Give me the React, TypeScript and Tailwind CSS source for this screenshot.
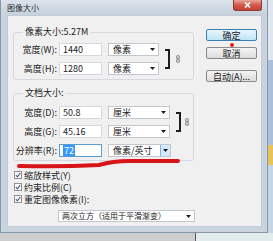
import React from 'react';

const Arrow = () => (
  <svg width="5" height="3" viewBox="0 0 5 3">
    <path d="M0 0h5L2.5 3z" fill="#1e1e1e" />
  </svg>
);

// small gray link glyph next to the bracket
const Chain = () => (
  <svg width="4" height="8" viewBox="0 0 4 8">
    <rect x="0.5" y="0.5" width="3" height="3.4" rx="1.2" fill="#c8c8c8" stroke="#858585" strokeWidth="0.9" />
    <rect x="0.5" y="4.1" width="3" height="3.4" rx="1.2" fill="#c8c8c8" stroke="#858585" strokeWidth="0.9" />
  </svg>
);

const Select = ({ value, width, hot }: { value: string; width: string; hot?: boolean }) => (
  <div className={`flex h-[13px] items-center justify-between border border-[#c3c7cd] bg-white pl-[4px] ${width}`}>
    <span>{value}</span>
    {hot ? (
      <span className="flex h-full w-[10px] items-center justify-center border-l border-[#7eb4ea] bg-[#d6e9fb]">
        <Arrow />
      </span>
    ) : (
      <span className="mr-[3px] flex">
        <Arrow />
      </span>
    )}
  </div>
);

const Row = ({
  label,
  value,
  unit,
  selWidth,
  focus,
}: {
  label: string;
  value: string;
  unit: string;
  selWidth: string;
  focus?: boolean;
}) => (
  <div className="flex h-[13px] items-center">
    <span className="w-[43px] text-right whitespace-nowrap">{label}</span>
    <div
      className={`ml-[2px] flex h-full w-[43px] items-center border bg-white pl-[3px] ${
        focus ? 'border-[#5b9bd5]' : 'border-[#d4d8dd]'
      }`}
    >
      {focus ? <span className="bg-[#3399ff] px-[1px] py-[1px] text-white">{value}</span> : <span>{value}</span>}
    </div>
    <div className="ml-[6px]">
      <Select value={unit} width={selWidth} hot={focus} />
    </div>
  </div>
);

const Bracket = ({ gap }: { gap: string }) => (
  <div className="flex items-center">
    <div className="h-[20px] w-[5px] border-y-2 border-r-2 border-[#1e1e1e]" />
    <div className={`flex ${gap}`}>
      <Chain />
    </div>
  </div>
);

const Check = ({ label }: { label: string }) => (
  <div className="flex h-[12px] items-center">
    <span className="ml-[1px] flex h-[8px] w-[8px] items-center justify-center border border-[#8e8f8f] bg-white">
      <svg width="6" height="6" viewBox="0 0 6 6">
        <path d="M0.8 3.2 2.4 4.8 5.3 1" fill="none" stroke="#4a5c8c" strokeWidth="1.2" />
      </svg>
    </span>
    <span className="ml-[2px] whitespace-nowrap">{label}</span>
  </div>
);

const Button = ({ label, primary }: { label: string; primary?: boolean }) => (
  <div
    className={`flex h-[12px] w-[51px] items-center justify-center rounded-[2px] border ${
      primary
        ? 'border-[#3c7fb1] bg-gradient-to-b from-[#e8f6fd] to-[#bfe4f7]'
        : 'border-[#8a8a8a] bg-gradient-to-b from-[#f4f4f4] to-[#dcdcdc]'
    }`}
  >
    {label}
  </div>
);

const App = () => {
  return (
    <div className="flex h-[241px] w-[273px] flex-col overflow-hidden bg-[#cfcfcf] font-['Noto_Sans_CJK_SC','Noto_Sans',sans-serif] text-[9px] leading-none text-[#222]">
      <div className="flex h-[233px]">
        {/* Dialog window */}
        <div className="relative flex w-[268px] flex-col border-x border-b border-[#8796a8] bg-[#c9d3de]">
          {/* Title bar */}
          <div className="flex h-[15px] items-start bg-gradient-to-b from-[#dbe3ec] to-[#c6d1dd]">
            <span className="pt-[4px] pl-[6px] text-[8px] text-[#2a2a2a]">图像大小</span>
            <div className="mr-[5px] ml-auto flex h-[11px] w-[29px] items-center justify-center rounded-b-[3px] border border-t-0 border-[#8d3b33] bg-gradient-to-b from-[#e9a597] via-[#d25a4c] to-[#c24434]">
              <svg width="7" height="6" viewBox="0 0 7 6">
                <path d="M1 0.5 6 5.5M6 0.5 1 5.5" stroke="#fff" strokeWidth="1.6" />
              </svg>
            </div>
          </div>

          {/* Client area */}
          <div className="ml-[6px] flex h-[212px] w-[255px] bg-[#f0f0f0] shadow-[inset_0_0_0_1px_#c3ccd6]">
            <div className="flex w-[188px] flex-col pl-[6px]">
              <fieldset className="mt-[11px] w-[181px] rounded-[3px] border border-[#d3d9df] pb-[4px]">
                <legend className="ml-[9px] px-[2px] leading-[12px] whitespace-nowrap">像素大小:5.27M</legend>
                <div className="mt-[5px] flex items-center">
                  <div className="flex flex-col gap-[6px]">
                    <Row label="宽度(W):" value="1440" unit="像素" selWidth="w-[51px]" />
                    <Row label="高度(H):" value="1280" unit="像素" selWidth="w-[51px]" />
                  </div>
                  <div className="ml-[6px]">
                    <Bracket gap="ml-[6px]" />
                  </div>
                </div>
              </fieldset>

              <fieldset className="mt-[7px] w-[181px] rounded-[3px] border border-[#d3d9df] pb-[3px]">
                <legend className="ml-[9px] px-[2px] leading-[12px]">文档大小:</legend>
                <div className="mt-[7px] flex items-center">
                  <div className="flex flex-col gap-[6px]">
                    <Row label="宽度(D):" value="50.8" unit="厘米" selWidth="w-[62px]" />
                    <Row label="高度(G):" value="45.16" unit="厘米" selWidth="w-[62px]" />
                  </div>
                  <div className="ml-[6px]">
                    <Bracket gap="ml-[4px]" />
                  </div>
                </div>
                <div className="mt-[6px]">
                  <Row label="分辨率(R):" value="72" unit="像素/英寸" selWidth="w-[63px]" focus />
                </div>
              </fieldset>

              <div className="mt-[8px] flex flex-col">
                <Check label="缩放样式(Y)" />
                <Check label="约束比例(C)" />
                <Check label="重定图像像素(I):" />
              </div>

              <div className="mt-[5px] ml-[45px] flex h-[12px] w-[137px] items-center justify-between border border-[#c3c7cd] bg-white pr-[3px] pl-[3px] text-[8px]">
                <span className="whitespace-nowrap">两次立方（适用于平滑渐变）</span>
                <Arrow />
              </div>
            </div>

            <div className="flex flex-col pl-[11px]">
              <div className="mt-[14px]">
                <Button label="确定" primary />
              </div>
              <div className="mt-[6px]">
                <Button label="取消" />
              </div>
              <div className="mt-[11px]">
                <Button label="自动(A)..." />
              </div>
            </div>
          </div>

          {/* Red annotations */}
          <span className="absolute top-[43px] left-[229px] h-[4px] w-[4px] rounded-full bg-[#e0161c]" />
          <svg className="absolute top-[156px] left-0" width="190" height="14" viewBox="0 0 190 14">
            <path
              d="M18 10 Q60 11 98 9 Q112 5 128 5 L177 5"
              fill="none"
              stroke="#d8141a"
              strokeWidth="4"
              strokeLinecap="round"
            />
          </svg>
        </div>

        {/* Desktop beyond the window */}
        <div className="flex flex-1 flex-col">
          <div className="h-[60px] bg-[#dfe6ee]" />
          <div className="h-[85px] bg-[#a8c0da]" />
          <div className="h-[20px] bg-[#e6c45a]" />
          <div className="flex-1 bg-[#c4d5e6]" />
        </div>
      </div>

      {/* Strip below the window */}
      <div className="flex flex-1">
        <div className="w-[195px] bg-[#cdcdcd]" />
        <div className="w-[1px] bg-[#5a5a5a]" />
        <div className="flex-1 bg-[#e2ecec]" />
      </div>
    </div>
  );
};

export default App;
